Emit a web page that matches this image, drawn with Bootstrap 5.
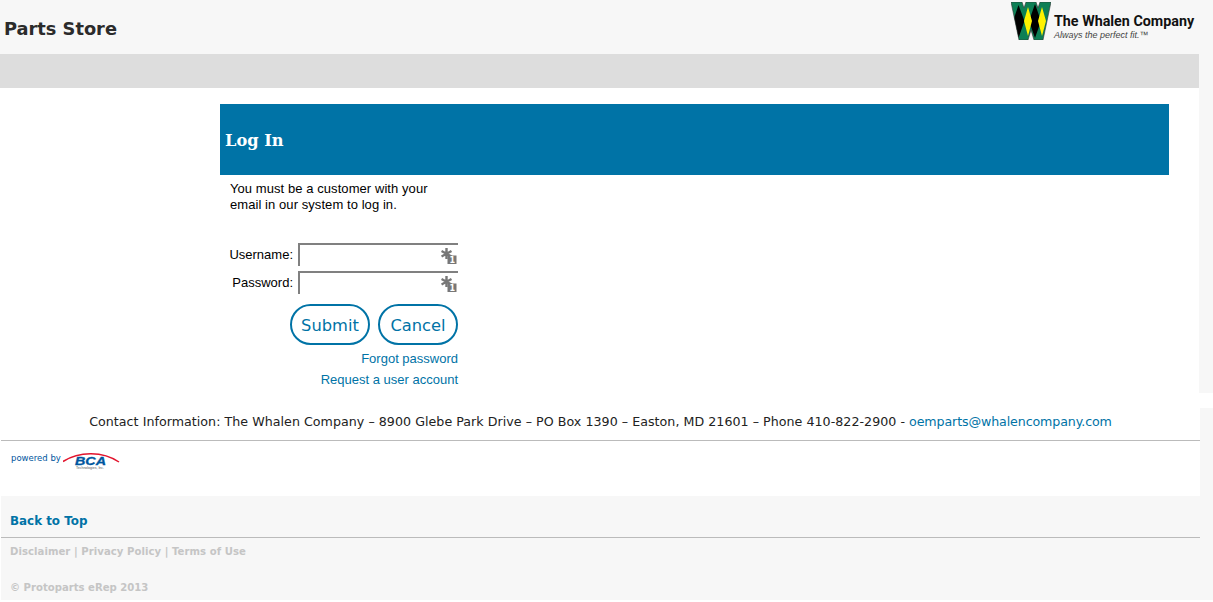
<!DOCTYPE html>
<html lang="en"><head><meta charset="utf-8"><title>Parts Store</title>
<link href="https://cdn.jsdelivr.net/npm/bootstrap@5.3.0/dist/css/bootstrap.min.css" rel="stylesheet">
<style>
html,body{height:602px;overflow:hidden}
body{background:#fff;color:#000;font-family:"DejaVu Sans",sans-serif}
a{text-decoration:none}
.top-shell{background:#f7f7f7}
.head-row{height:54px;width:1199px}
.site-title{font-size:17.8px;font-weight:700;color:#2b2b2b;margin:0;padding:19px 0 0 4px;line-height:20px;font-family:"DejaVu Sans",sans-serif}
.logo-box{width:188px;padding-top:2px}
.logo-words{padding:12px 0 0 3px;white-space:nowrap}
.logo-name{font:700 14.3px/15px Roboto,"Liberation Sans",sans-serif;color:#111}
.logo-tag{font:italic 9px/10px "Liberation Sans",sans-serif;color:#444;margin-top:1px}
.gray-band{height:34px;width:1199px;background:#ddd}
.body-wrap{width:1199px;height:305px;background:#fff;padding:16px 30px 0 220px}
.login-head{height:71px;background:#0073a6;color:#fff;font:700 16.2px/1 "DejaVu Serif",serif;padding:3px 0 0 5px}
.login-head h1{font:inherit;margin:0}
.login-col{width:238px;font:13px/16px "Liberation Sans",Arial,sans-serif}
.login-note{padding:6px 0 0 10px;height:68px;margin:0;letter-spacing:.07px}
.field-row{height:28px}
.field-lab{margin:1px 5px 0 0;line-height:22px}
.field-box{width:160px;height:23px;position:relative;border-top:2px solid #808080;border-left:2px solid #808080;background:#fff}
.field-box input{width:100%;height:100%;border:0;padding:0;outline:0;background:transparent;display:block}
.field-key{position:absolute;right:1px;top:3px}
.pill-btn{width:80px;height:41px;border:2px solid #0073a6;border-radius:21px;background:#fff;color:#0073a6;font:16.3px/1 "DejaVu Sans",sans-serif;padding:3px 0 0}
.pill-gap{gap:8px;margin-top:5px}
.login-link{display:block;color:#0073a6;line-height:21px;text-align:right}
.link-one{margin-top:3px}
.contact-wrap{height:88px;width:1200px;background:#fff}
.contact-line{height:33px;font-size:12.65px;line-height:27px;color:#222;text-align:center;border-bottom:1px solid #bbb;margin-left:1px;width:1199px;letter-spacing:.033px}
.contact-line a{color:#0073a6;letter-spacing:-.12px}
.right-rail{background:#f7f7f7;height:88px}
.mid-row{height:88px}
.gap-row{height:15px}
.brand-row{padding:10px 0 0 11px}
.power-text{font-size:8.5px;color:#00569e;line-height:14px;margin-right:2px}
.foot-shell{height:104px;background:#f7f7f7;margin-left:1px}
.back-link{font-size:11.9px;font-weight:700;color:#0073a6;line-height:16px;display:block;padding:17px 0 0 9px;height:42px;border-bottom:1px solid #bbb;width:1199px}
.foot-meta{font-size:10.1px;font-weight:700;color:#c5c5c5;line-height:13px;padding-left:9px}
.foot-meta a{color:#c5c5c5}
.meta-one{padding-top:7px;height:43px;letter-spacing:.05px}
</style></head>
<body>
<div class="top-shell">
<header class="head-row d-flex justify-content-between">
<h2 class="site-title">Parts Store</h2>
<div class="logo-box d-flex align-items-start">
<svg width="40" height="38" viewBox="0 1 40 38" class="flex-shrink-0"><defs><clipPath id="wclip"><path d="M0 1H11L13 7 15 1H25L27 7 29 1H40L32 39H23L20 29 17 39H8z"/></clipPath></defs><g clip-path="url(#wclip)"><rect width="40" height="40" fill="#0d7f55"/><path fill="#000" d="M7.500 4L13.500 20 7.500 37 2 20zM24 3L30 20 24 37 18 20z"/><path fill="#fff200" d="M17 6L21 20 17 35 13 20zM31 6L35 20 31 35 27 20z"/></g><path fill="none" stroke="#333" stroke-width=".6" d="M0 1H11L13 7 15 1H25L27 7 29 1H40L32 39H23L20 29 17 39H8z"/></svg>
<div class="logo-words flex-grow-1"><div class="logo-name">The Whalen Company</div><div class="logo-tag">Always the perfect fit.™</div></div>
</div>
</header>
<div class="gray-band"></div>
</div>
<div class="d-flex">
<main class="body-wrap">
<div class="login-head d-flex align-items-center"><h1>Log In</h1></div>
<form class="login-col">
<p class="login-note">You must be a customer with your email in our system to log in.</p>
<div class="field-row d-flex justify-content-end"><label class="field-lab" for="u">Username:</label><div class="field-box"><input id="u" type="text"><svg class="field-key" width="16" height="16" viewBox="0 0 16 16"><g stroke="#777" stroke-width="2.400"><path d="M5.500 0v11M.5 3l10 5.500M.5 8.500l10-5.500"/></g><rect x="6.500" y="7.500" width="9" height="8.500" fill="#777"/><text x="8.500" y="15" font-size="8" font-weight="700" fill="#fff" font-family="DejaVu Sans">1</text></svg></div></div>
<div class="field-row d-flex justify-content-end"><label class="field-lab" for="p">Password:</label><div class="field-box"><input id="p" type="password"><svg class="field-key" width="16" height="16" viewBox="0 0 16 16"><g stroke="#777" stroke-width="2.400"><path d="M5.500 0v11M.5 3l10 5.500M.5 8.500l10-5.500"/></g><rect x="6.500" y="7.500" width="9" height="8.500" fill="#777"/><text x="8.500" y="15" font-size="8" font-weight="700" fill="#fff" font-family="DejaVu Sans">1</text></svg></div></div>
<div class="d-flex justify-content-end pill-gap"><button type="button" class="pill-btn">Submit</button><button type="button" class="pill-btn">Cancel</button></div>
<a class="login-link link-one" href="#">Forgot password</a>
<a class="login-link" href="#">Request a user account</a>
</form>
</main>
<div class="flex-grow-1 top-shell"></div>
</div>
<div class="gap-row"></div>
<div class="d-flex mid-row">
<div class="contact-wrap">
<div class="contact-line">Contact Information: The Whalen Company – 8900 Glebe Park Drive – PO Box 1390 – Easton, MD 21601 – Phone 410-822-2900 - <a href="#">oemparts@whalencompany.com</a></div>
<div class="brand-row d-flex align-items-start"><span class="power-text">powered by</span>
<svg width="57" height="20" viewBox="0 0 57 20"><path d="M0 10.500C16 0 40 0 56 11" fill="none" stroke="#e2142d" stroke-width="1.500"/><text x="12" y="13.500" font-size="11" font-weight="700" font-style="italic" fill="#00569e" stroke="#00569e" stroke-width=".3" font-family="Liberation Sans" textLength="31" lengthAdjust="spacingAndGlyphs">BCA</text><text x="13" y="17.500" font-size="3.500" fill="#555" font-family="Liberation Sans">Technologies, Inc.</text></svg></div>
</div>
<div class="flex-grow-1 right-rail"></div>
</div>
<footer class="foot-shell">
<a class="back-link" href="#">Back to Top</a>
<div class="foot-meta meta-one"><a href="#">Disclaimer</a> | <a href="#">Privacy Policy</a> | <a href="#">Terms of Use</a></div>
<div class="foot-meta">© Protoparts eRep 2013</div>
</footer>
<script src="https://cdn.jsdelivr.net/npm/bootstrap@5.3.0/dist/js/bootstrap.bundle.min.js"></script>
</body></html>
